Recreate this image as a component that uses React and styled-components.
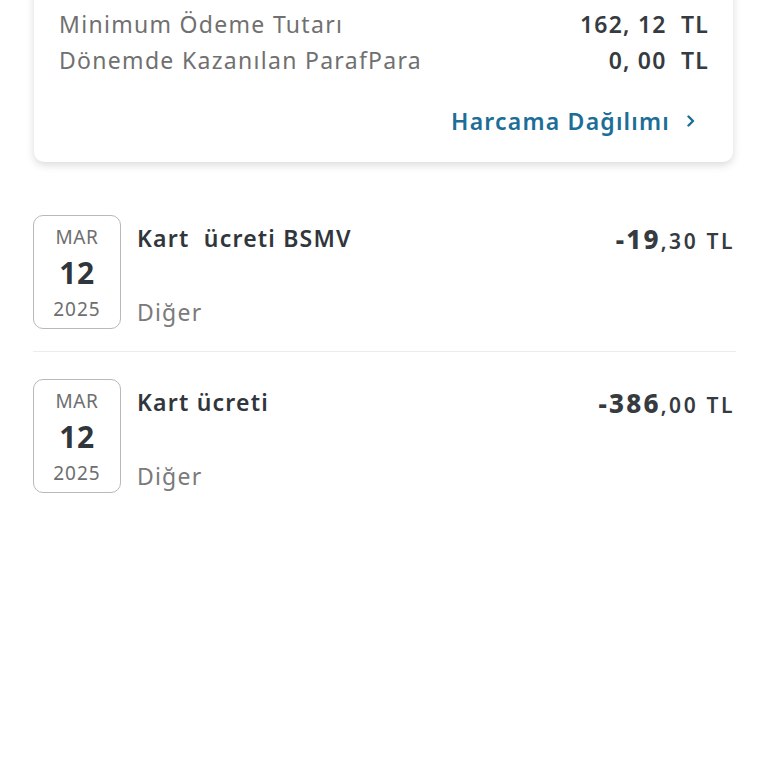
import React from 'react'
import styled, { createGlobalStyle } from 'styled-components'

const GlobalStyle = createGlobalStyle`
  html, body {
    margin: 0;
    padding: 0;
    background: #ffffff;
    overflow: hidden;
  }
  body {
    font-family: 'Noto Sans', 'Open Sans', sans-serif;
    color: #30363c;
    letter-spacing: 1.2px;
  }
`

const Page = styled.div`
  width: 768px;
  height: 768px;
  overflow: hidden;
`

const SummaryCard = styled.section`
  margin: -46px 35px 0 34px;
  padding: 16px 25px 23px 25px;
  background: #fff;
  border-radius: 0 0 10px 10px;
  box-shadow: 0 3px 9px rgba(0, 0, 0, 0.15);
`

const SummaryRow = styled.div`
  display: flex;
  justify-content: space-between;
  align-items: center;
  height: 36px;
  font-size: 23px;
`

const Label = styled.span`
  color: #707070;
  letter-spacing: 1.3px;
`

const Value = styled.span`
  color: #353b41;
  font-weight: 600;
  white-space: pre;
  margin-right: -1px;
`

const LinkRow = styled.div`
  display: flex;
  justify-content: flex-end;
  align-items: center;
  height: 36px;
  margin-top: 25px;
  padding-right: 12px;
`

const DetailLink = styled.a`
  display: inline-flex;
  align-items: center;
  gap: 16px;
  color: #1b6e97;
  font-size: 23px;
  font-weight: 600;
  text-decoration: none;
  cursor: pointer;

  svg {
    width: 10px;
    height: 12px;
  }
`

const List = styled.ul`
  list-style: none;
  margin: 26px 32px 0 33px;
  padding: 0;
`

const Item = styled.li`
  display: flex;
  gap: 16px;
  padding: 27px 3px 22px 0;
  border-bottom: ${({ $last }) => ($last ? 'none' : '1.5px solid #ececec')};
`

const DateBox = styled.div`
  box-sizing: border-box;
  width: 88px;
  height: 114px;
  flex-shrink: 0;
  border: 1px solid #b9b9b9;
  border-radius: 10px;
  display: flex;
  flex-direction: column;
  align-items: center;
  justify-content: space-between;
  padding: 7px 0 5px;
  letter-spacing: 0.6px;
`

const Month = styled.span`
  font-size: 19px;
  color: #6e6e6e;
  line-height: 28px;
`

const Day = styled.span`
  font-size: 30px;
  font-weight: 700;
  color: #30363c;
  line-height: 38px;
`

const Year = styled.span`
  font-size: 19px;
  color: #6e6e6e;
  line-height: 28px;
  letter-spacing: 1px;
`

const Info = styled.div`
  flex: 1;
  display: flex;
  flex-direction: column;
  justify-content: space-between;
  padding: 7px 0 1px;
`

const Title = styled.span`
  font-size: 23px;
  font-weight: 600;
  color: #30363c;
  line-height: 32px;
  white-space: pre;
`

const Category = styled.span`
  font-size: 23px;
  color: #7a7a7a;
  line-height: 32px;
`

const Amount = styled.div`
  padding-top: 8px;
  font-size: 21px;
  font-weight: 600;
  color: #353b41;
  line-height: 32px;
  letter-spacing: 2.6px;
  margin-right: -2px;

  b {
    font-size: 26px;
    font-weight: 800;
    letter-spacing: 2.2px;
  }
`

const Chevron = () => (
  <svg viewBox="0 0 10 12" fill="none">
    <path d="M2.5 1.5 L7 6 L2.5 10.5" stroke="currentColor" strokeWidth="2.4" strokeLinecap="round" strokeLinejoin="round" />
  </svg>
)

const summary = [
  { label: 'Dönem Borcu', value: '1.621, 24  TL' },
  { label: 'Minimum Ödeme Tutarı', value: '162, 12  TL' },
  { label: 'Dönemde Kazanılan ParafPara', value: '0, 00  TL' },
]

const transactions = [
  { month: 'MAR', day: '12', year: '2025', title: 'Kart  ücreti BSMV', category: 'Diğer', whole: '-19', cents: ',30 TL' },
  { month: 'MAR', day: '12', year: '2025', title: 'Kart ücreti', category: 'Diğer', whole: '-386', cents: ',00 TL' },
]

export default function App() {
  return (
    <Page>
      <GlobalStyle />
      <SummaryCard>
        {summary.map((row) => (
          <SummaryRow key={row.label}>
            <Label>{row.label}</Label>
            <Value>{row.value}</Value>
          </SummaryRow>
        ))}
        <LinkRow>
          <DetailLink>
            Harcama Dağılımı
            <Chevron />
          </DetailLink>
        </LinkRow>
      </SummaryCard>

      <List>
        {transactions.map((t, i) => (
          <Item key={t.title} $last={i === transactions.length - 1}>
            <DateBox>
              <Month>{t.month}</Month>
              <Day>{t.day}</Day>
              <Year>{t.year}</Year>
            </DateBox>
            <Info>
              <Title>{t.title}</Title>
              <Category>{t.category}</Category>
            </Info>
            <Amount>
              <b>{t.whole}</b>{t.cents}
            </Amount>
          </Item>
        ))}
      </List>
    </Page>
  )
}
